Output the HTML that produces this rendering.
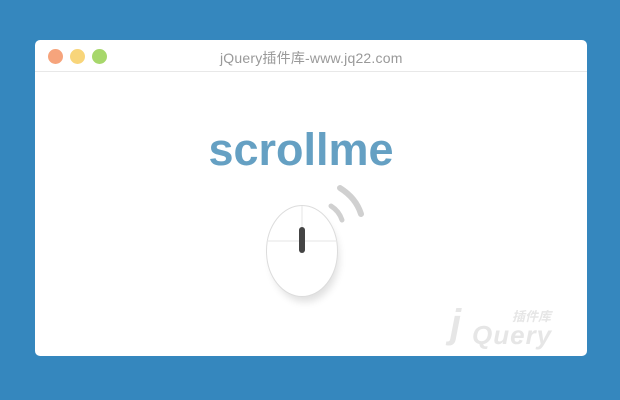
<!DOCTYPE html>
<html><head><meta charset="utf-8"><style>
html,body{margin:0;padding:0;width:620px;height:400px;background:#3587be;overflow:hidden;font-family:"Liberation Sans","Noto Sans CJK SC",sans-serif}
.win{position:absolute;left:35px;top:40px;width:552px;height:316px;background:#fff;border-radius:5px;overflow:hidden}
.bar{height:31px;border-bottom:1px solid #e8e8e8;position:relative}
.dot{position:absolute;top:9px;width:15px;height:15px;border-radius:50%}
.title{position:absolute;left:185px;top:8px;white-space:nowrap;font-size:14px;color:#999;letter-spacing:0.2px}
.h{position:absolute;left:0;width:532px;top:84px;text-align:center;font-size:45px;font-weight:bold;color:#65a0c3}
.wm{position:absolute;left:415px;top:262px;color:#e6e6e6;font-weight:bold;font-style:italic;white-space:nowrap}
</style></head><body>
<div class="win">
 <div class="bar">
  <div class="dot" style="left:13px;background:#f6a47c"></div>
  <div class="dot" style="left:35px;background:#f8d57a"></div>
  <div class="dot" style="left:57px;background:#a7d76b"></div>
  <div class="title">jQuery插件库-www.jq22.com</div>
 </div>
 <div class="h">scrollme</div>
 <svg style="position:absolute;left:0;top:0" width="552" height="316">
  <defs><filter id="s" x="-50%" y="-50%" width="200%" height="200%"><feGaussianBlur stdDeviation="4"/></filter></defs>
  <ellipse cx="270" cy="218" rx="34" ry="44" fill="#000" opacity="0.12" filter="url(#s)"/>
  <ellipse cx="267" cy="211" rx="35.5" ry="45.5" fill="#fff" stroke="#dcdcdc" stroke-width="1"/>
  <line x1="267" y1="166" x2="267" y2="201" stroke="#e6e6e6"/>
  <line x1="232" y1="201" x2="302" y2="201" stroke="#e6e6e6"/>
  <line x1="267" y1="190" x2="267" y2="210" stroke="#444" stroke-width="6" stroke-linecap="round"/>
  <path d="M296 166 Q304 171 307 180" fill="none" stroke="#d0d0d0" stroke-width="5" stroke-linecap="round"/>
  <path d="M305 148 Q321 158 326 174" fill="none" stroke="#d0d0d0" stroke-width="6" stroke-linecap="round"/>
 </svg>
 <div class="wm">
  <span style="position:absolute;left:0;top:0;font-size:40px">j</span>
  <span style="position:absolute;left:22px;top:18px;font-size:26px;letter-spacing:1px">Query</span>
  <span style="position:absolute;left:62px;top:4px;font-size:13px">插件库</span>
 </div>
</div>
</body></html>
